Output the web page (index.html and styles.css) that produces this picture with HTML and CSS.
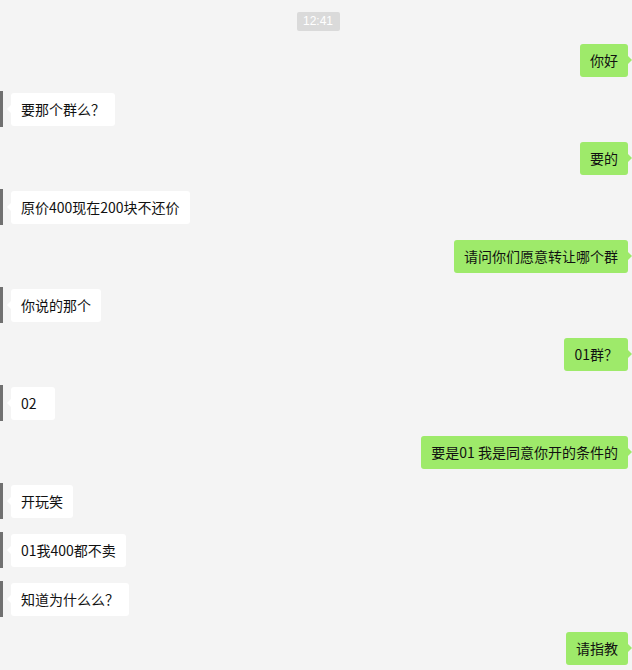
FILE: index.html
```html
<!DOCTYPE html>
<html lang="zh">
<head>
<meta charset="utf-8">
<link rel="stylesheet" href="styles.css">
</head>
<body>
<div class="chat">
  <div class="time-row"><span class="time">12:41</span></div>
  <div class="msg right"><div class="bubble">你好</div></div>
  <div class="msg left"><div class="avatar"></div><div class="bubble">要那个群么？</div></div>
  <div class="msg right"><div class="bubble">要的</div></div>
  <div class="msg left"><div class="avatar"></div><div class="bubble">原价400现在200块不还价</div></div>
  <div class="msg right"><div class="bubble">请问你们愿意转让哪个群</div></div>
  <div class="msg left"><div class="avatar"></div><div class="bubble">你说的那个</div></div>
  <div class="msg right"><div class="bubble">01群？</div></div>
  <div class="msg left"><div class="avatar"></div><div class="bubble">02</div></div>
  <div class="msg right"><div class="bubble">要是01 我是同意你开的条件的</div></div>
  <div class="msg left"><div class="avatar"></div><div class="bubble">开玩笑</div></div>
  <div class="msg left"><div class="avatar"></div><div class="bubble">01我400都不卖</div></div>
  <div class="msg left"><div class="avatar"></div><div class="bubble">知道为什么么？</div></div>
  <div class="msg right"><div class="bubble">请指教</div></div>
</div>
</body>
</html>
```
FILE: styles.css
```css
html, body {
  margin: 0;
  padding: 0;
  background: #f4f4f4;
}
body {
  font-family: "Noto Sans CJK SC", "Noto Sans", sans-serif;
  font-size: 14px;
  color: #111111;
  width: 632px;
  height: 670px;
  overflow: hidden;
}
.chat {
  display: flex;
  flex-direction: column;
  gap: 16px;
  padding: 12px 4px 0 0;
}
.time-row {
  display: flex;
  justify-content: center;
  margin-bottom: -3px;
  padding-left: 9px;
}
.time {
  background: #dadada;
  color: #fff;
  font-family: "Liberation Sans", sans-serif;
  font-size: 12px;
  line-height: 19px;
  padding: 0 7px 0 6px;
  border-radius: 2px;
}
.msg {
  display: flex;
  align-items: flex-start;
  height: 33px;
}
.msg.right {
  justify-content: flex-end;
}
.avatar {
  width: 3px;
  height: 36px;
  margin-top: -2px;
  background: #707070;
  margin-right: 8px;
}
.bubble {
  position: relative;
  box-sizing: border-box;
  height: 33px;
  min-width: 44px;
  padding: 7px 10px;
  line-height: 19px;
  border-radius: 3px;
  white-space: nowrap;
}
.left .bubble {
  background: #ffffff;
}
.right .bubble {
  background: #9eea6a;
}
.left .bubble::before {
  content: "";
  position: absolute;
  left: -4px;
  top: 12px;
  border-style: solid;
  border-width: 4px 4px 4px 0;
  border-color: transparent #ffffff transparent transparent;
}
.right .bubble::after {
  content: "";
  position: absolute;
  right: -4px;
  top: 12px;
  border-style: solid;
  border-width: 4px 0 4px 4px;
  border-color: transparent transparent transparent #9eea6a;
}
```
